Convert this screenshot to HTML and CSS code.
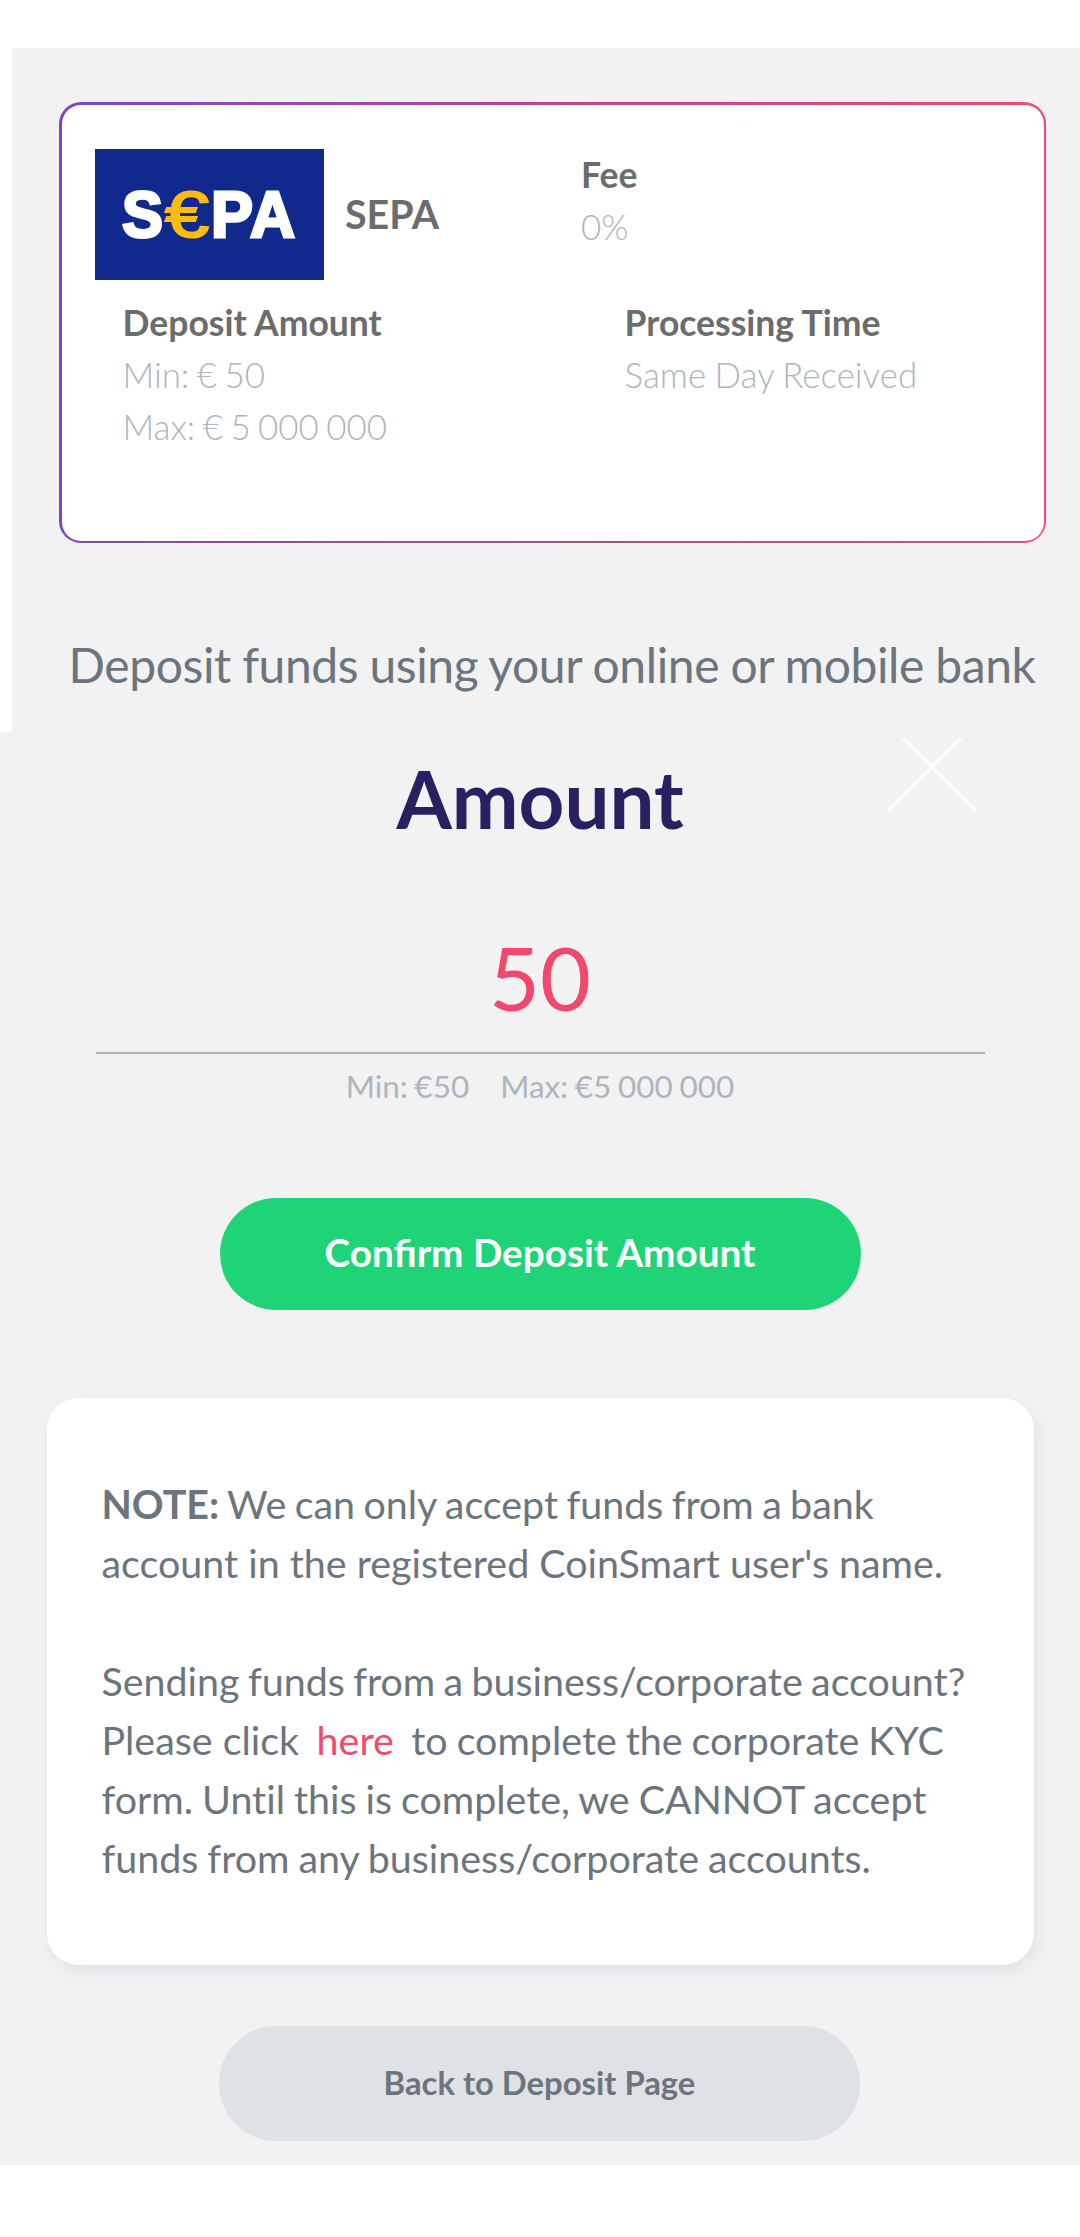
FILE: index.html
```html
<!DOCTYPE html>
<html lang="en">
<head>
<meta charset="utf-8">
<title>Deposit</title>
<link rel="stylesheet" href="styles.css">
</head>
<body>
<section class="method">
  <div class="method-card">
    <div class="method-inner">
      <div class="method-head">
        <svg class="logo" viewBox="0 0 229 131" role="img" aria-label="SEPA">
          <g class="logo-word">
            <text x="27" y="87.500" textLength="41" lengthAdjust="spacingAndGlyphs">S</text>
            <text class="logo-euro" x="70" y="87.500" textLength="44" lengthAdjust="spacingAndGlyphs">€</text>
            <text x="116" y="87.500" textLength="42" lengthAdjust="spacingAndGlyphs">P</text>
            <text x="155" y="87.500" textLength="45" lengthAdjust="spacingAndGlyphs">A</text>
          </g>
        </svg>
        <h2 class="method-name">SEPA</h2>
        <dl class="fact fee"><dt>Fee</dt><dd>0%</dd></dl>
      </div>
      <div class="method-facts">
        <dl class="fact"><dt>Deposit Amount</dt><dd>Min: € 50</dd><dd>Max: € 5 000 000</dd></dl>
        <dl class="fact"><dt>Processing Time</dt><dd class="fact-text">Same Day Received</dd></dl>
      </div>
    </div>
  </div>
  <p class="method-hint">Deposit funds using your online or mobile bank</p>
</section>
<main class="deposit">
  <svg class="close" viewBox="0 0 90 73" aria-hidden="true"><path d="M-10 84 84-10M100 84 5-11"/></svg>
  <h1 class="title">Amount</h1>
  <div class="amount">50</div>
  <div class="limits"><span>Min: €50</span><span>Max: €5 000 000</span></div>
  <button class="btn btn-confirm">Confirm Deposit Amount</button>
  <article class="note">
    <p><span class="tight"><b>NOTE:</b> We can only accept funds from a bank</span><br>account in the registered CoinSmart user's name.</p>
    <p><span class="tight">Sending funds from a business/corporate account?</span><br>Please click <a href="#">here</a> <span class="snug">to complete the corporate KYC</span><br><span class="snug">form. Until this is complete, we CANNOT accept</span><br><span class="snug">funds from any business/corporate accounts.</span></p>
  </article>
  <button class="btn btn-back">Back to Deposit Page</button>
</main>
</body>
</html>
```
FILE: styles.css
```css
* { box-sizing: border-box; }
body { margin: 0; background: #fff; color: #6c757d; font-family: Lato, "Liberation Sans", sans-serif; }
h1, h2, p, dl, dd { margin: 0; }

.method { margin: 48px 0 0 12px; height: 684px; padding: 54px 34px 0 47px; background: #f2f2f2; }
.method-card {
  height: 441px;
  padding: 3px 2px 2px 3px;
  border-radius: 22px;
  background:
    linear-gradient(90deg, #7e4e96, #be5f76) 22px 100% / calc(100% - 44px) 2px no-repeat,
    linear-gradient(90deg, #7f44c4, #ef4a6d);
}
.method-inner { height: 100%; padding: 44px 33px 0; border-radius: 19px; background: #fff; }
.method-head { display: grid; grid-template-columns: 250px 236px 1fr; align-items: center; height: 131px; }
.logo { display: block; width: 229px; height: 131px; background: #11298d; }
.logo-word { fill: #fff; stroke: #fff; stroke-width: 3; font: bold 65px "Liberation Sans", Arial, sans-serif; }
.logo-euro { fill: #ffbc0b; stroke: #ffbc0b; stroke-width: 2; font-weight: 400; }
.method-name { color: #6c6c6c; font-size: 39.4px; line-height: 57px; padding-bottom: 2px; font-weight: 700; }
.fact { color: #adb5bd; font-size: 34.9px; line-height: 52px; font-weight: 300; word-spacing: -2px; }
.fact dt { color: #6c6c6c; font-size: 35.5px; font-weight: 700; word-spacing: 0; }
.fact-text { word-spacing: -1px; }
.fee { align-self: start; }
.method-facts { display: grid; grid-template-columns: 502px 1fr; padding: 17px 0 0 27.5px; }
.method-hint { margin: 85px -20px 0 9.5px; font-size: 48px; line-height: 74px; letter-spacing: -0.4px; word-spacing: -0.6px; white-space: nowrap; }

.deposit { position: relative; height: 1433px; display: flex; flex-direction: column; align-items: center; background: #f2f2f2; }
.close { position: absolute; left: 887px; top: 6px; width: 90px; height: 73px; fill: none; stroke: #fff; stroke-opacity: .7; stroke-width: 4; }
.title { margin-top: 19px; color: #262262; font-size: 79.8px; line-height: 95px; font-weight: 700; }
.amount { width: 889px; height: 154px; margin-top: 54px; padding-top: 24px; border-bottom: 2px solid #a9b3bb; color: #f0486e; font-size: 88px; line-height: 106px; text-align: center; }
.limits { display: flex; gap: 31px; margin-top: 9px; color: #adb5bd; font-size: 31.5px; line-height: 46px; word-spacing: -1.4px; }
.btn { display: block; width: 641px; border: 0; border-radius: 57px; font-family: inherit; font-weight: 700; padding: 0; }
.btn-confirm { height: 112px; margin-top: 89px; padding-bottom: 5px; background: #1ed477; color: #fff; font-size: 38.7px; }
.note { width: 987px; height: 567px; margin-top: 88px; padding: 76px 30px 0 55px; border-radius: 32px; background: #fff; box-shadow: 3px 7px 18px #dfe3e8; font-size: 39.4px; line-height: 59px; white-space: nowrap; font-variant-ligatures: none; }
.note p + p { margin-top: 59px; }
.note a { margin: 0 7.5px; color: #ef4a6d; text-decoration: none; }
.tight { word-spacing: -1.7px; }
.snug { word-spacing: -1.1px; }
.btn-back { height: 115px; margin: 61px 1px 0 0; padding-bottom: 3px; background: #dee1e6; color: #6c757d; font-size: 32.8px; }
```
